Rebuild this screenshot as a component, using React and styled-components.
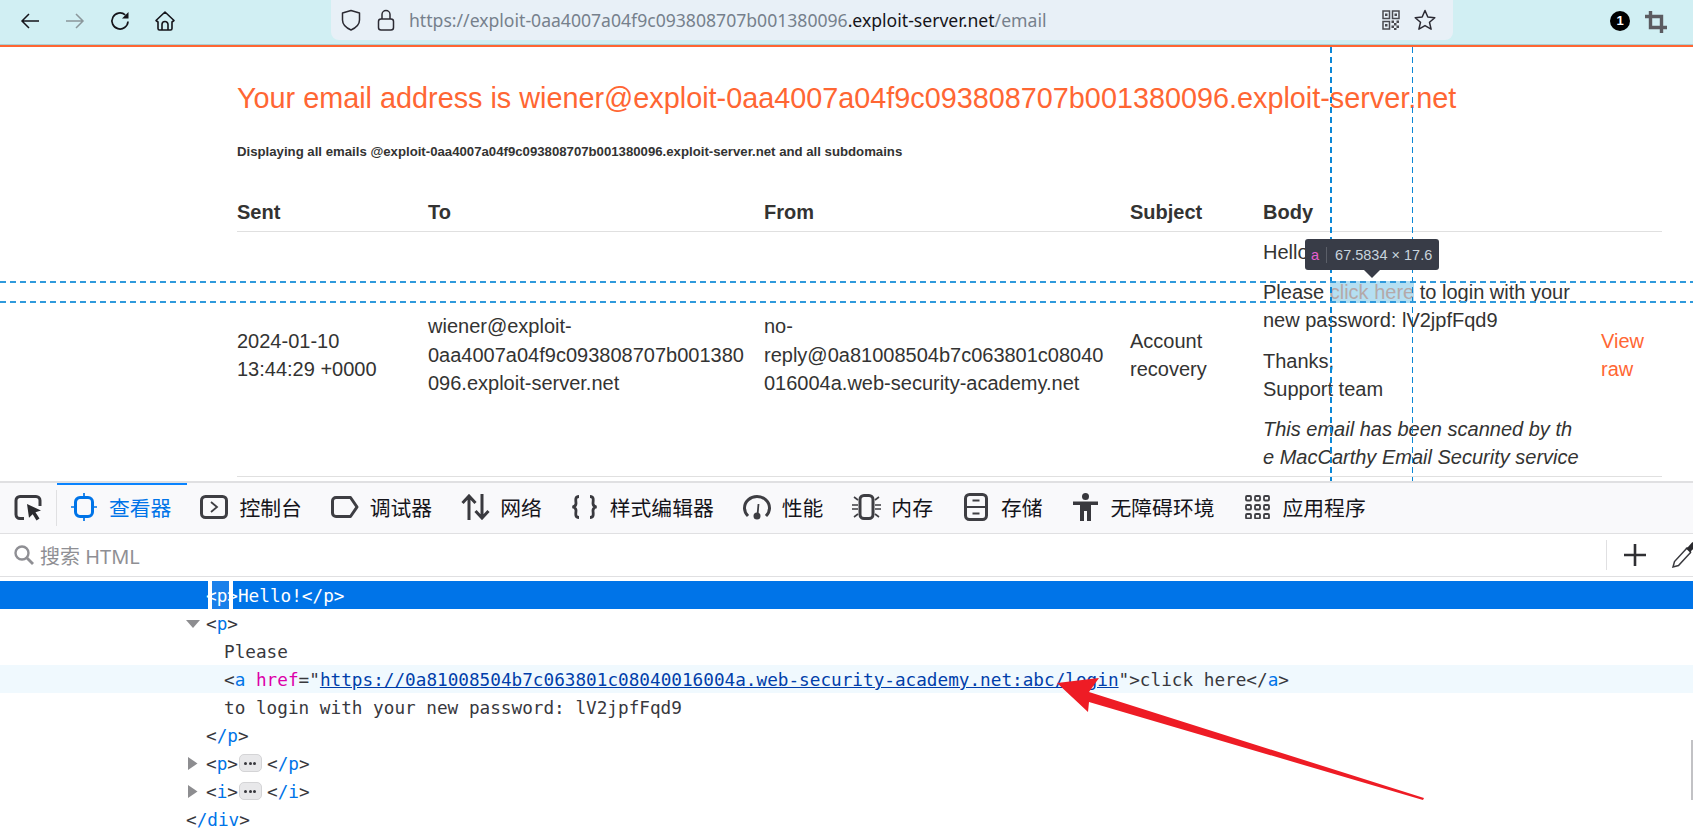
import React from 'react';
import styled, { createGlobalStyle } from 'styled-components';

const Global = createGlobalStyle`
  html, body { margin: 0; padding: 0; background: #fff; }
  body { font-family: "Liberation Sans", Arial, sans-serif; }
`;

const Shell = styled.div`
  width: 1693px;
  height: 836px;
  display: flex;
  flex-direction: column;
  overflow: hidden;
  position: relative;
`;

/* browser chrome */
const BrowserBar = styled.div`
  height: 45px;
  flex: none;
  background: #d1eff3;
  border-bottom: 2px solid #ff6633;
  box-shadow: inset 0 -1px 0 #a9cfd4;
  display: flex;
  align-items: flex-start;
  padding-left: 19px;
`;
const NavBtn = styled.div`
  width: 45px;
  height: 42px;
  display: flex;
  align-items: center;
  justify-content: flex-start;
  flex: none;
`;
const AddressBar = styled.div`
  margin-left: 132px;
  width: 1122px;
  height: 40px;
  flex: none;
  background: #e8f0f7;
  border-radius: 0 0 8px 8px;
  display: flex;
  align-items: center;
  padding: 0 9px;
  box-sizing: border-box;
`;
const UrlIcon = styled.span`
  display: flex;
  margin-right: ${(p) => p.$mr}px;
`;
const Url = styled.div`
  flex: 1;
  font-family: "Noto Sans", sans-serif;
  font-size: 17.6px;
  color: #76808c;
  white-space: nowrap;
  b { font-weight: 400; color: #15141a; }
`;
const Badge = styled.div`
  width: 20px;
  height: 20px;
  margin: 11px 0 0 157px;
  border-radius: 50%;
  background: #000;
  color: #fff;
  font-size: 13px;
  font-weight: 700;
  text-align: center;
  line-height: 20px;
  flex: none;
`;
const CropWrap = styled.div`
  margin: 10px 0 0 14px;
  flex: none;
`;

/* page */
const Page = styled.main`
  height: 434px;
  flex: none;
  position: relative;
  overflow: hidden;
  box-sizing: border-box;
  padding: 31px 31px 0 237px;
  color: #333332;
`;
const Title = styled.h1`
  margin: 0;
  font-size: 28.8px;
  line-height: 40px;
  font-weight: 400;
  color: #ff6633;
  white-space: nowrap;
`;
const Sub = styled.h2`
  margin: 24px 0 0;
  font-size: 13.2px;
  line-height: 20px;
  font-weight: 700;
  white-space: nowrap;
`;
const MailTable = styled.table`
  margin-top: 31px;
  width: 1425px;
  table-layout: fixed;
  border-collapse: collapse;
  font-size: 20px;
  line-height: 28.2px;
`;
const Th = styled.th`
  height: 38px;
  padding: 0;
  text-align: left;
  font-size: 20px;
  font-weight: 700;
  border-bottom: 1px solid #e0e0e0;
  width: ${(p) => p.$w}px;
`;
const Td = styled.td`
  padding: 6px 0 5px;
  vertical-align: middle;
  border-bottom: 1px solid #e0e0e0;
`;
const BodyP = styled.p`
  margin: 0 0 12px;
  &:last-child { margin-bottom: 0; }
`;
const ClickLink = styled.a`
  color: #b4a9a9;
  background: #b5dff2;
`;
const Raw = styled.a`
  color: #ff6633;
  display: block;
`;
const GuideV = styled.div`
  position: absolute;
  top: 0;
  bottom: 0;
  left: ${(p) => p.$x}px;
  width: ${(p) => p.$w}px;
  background: repeating-linear-gradient(to bottom, #0a87d6 0 6px, transparent 6px 10px);
`;
const GuideH = styled.div`
  position: absolute;
  left: 0;
  right: 0;
  top: ${(p) => p.$y}px;
  height: 2px;
  background: repeating-linear-gradient(to right, #2f9adc 0 6px, transparent 6px 10px);
`;
const Tip = styled.div`
  position: absolute;
  left: 1305px;
  top: 192px;
  width: 134px;
  height: 31px;
  box-sizing: border-box;
  background: #383c47;
  border-radius: 3px;
  color: #c9d4dd;
  font-size: 14.5px;
  display: flex;
  align-items: center;
  white-space: nowrap;
  padding-left: 6px;
  &::after {
    content: '';
    position: absolute;
    left: 59px;
    bottom: -8px;
    border: 8px solid transparent;
    border-bottom: 0;
    border-top-color: #383c47;
  }
`;
const TipTag = styled.span`
  color: #e65fd0;
  padding-right: 7px;
  margin-right: 8px;
  border-right: 1px solid #5b5f69;
`;

/* devtools */
const Tools = styled.section`
  flex: 1;
  border-top: 2px solid #e0e0e2;
  min-height: 0;
  display: flex;
  flex-direction: column;
`;
const TabBar = styled.div`
  height: 50px;
  flex: none;
  background: #f9f9fb;
  border-bottom: 1px solid #e0e0e2;
  display: flex;
  align-items: stretch;
`;
const PickBtn = styled.div`
  width: 57px;
  margin: 7px 0;
  border-right: 1px solid #e0e0e2;
  display: flex;
  align-items: center;
  padding-left: 14px;
  box-sizing: border-box;
  flex: none;
`;
const Tab = styled.div`
  display: flex;
  align-items: center;
  gap: 14px;
  padding: 0 16px 2px;
  font-family: "Noto Sans CJK SC", sans-serif;
  font-size: 20.8px;
  color: ${(p) => (p.$active ? '#0074e8' : '#15141a')};
  box-shadow: ${(p) => (p.$active ? 'inset 0 2px 0 #0a84ff' : 'none')};
  white-space: nowrap;
`;
const TabIcon = styled.span`
  width: 22px;
  display: flex;
  justify-content: center;
  flex: none;
  svg { flex: none; }
`;
const SearchBar = styled.div`
  height: 43px;
  flex: none;
  border-bottom: 1px solid #e0e0e2;
  display: flex;
  align-items: center;
  padding-left: 13px;
  box-sizing: border-box;
`;
const SearchText = styled.div`
  flex: 1;
  margin-left: 5px;
  font-family: "Noto Sans", "Noto Sans CJK SC", sans-serif;
  font-size: 20px;
  color: #8f8f94;
`;
const SearchTool = styled.div`
  height: 30px;
  padding-left: 16px;
  border-left: 1px solid #e0e0e2;
  display: flex;
  align-items: center;
  gap: 24px;
  width: 87px;
  box-sizing: border-box;
  overflow: hidden;
  flex: none;
  svg { flex: none; }
`;
const Code = styled.div`
  margin-top: 4px;
  font-family: "DejaVu Sans Mono", monospace;
  font-size: 17.69px;
  color: #38383d;
  white-space: pre;
`;
const Row = styled.div`
  height: 28px;
  line-height: 31px;
  padding-left: ${(p) => p.$x}px;
  background: ${(p) => (p.$sel ? '#0074e8' : p.$hover ? '#f0f9fe' : 'transparent')};
  color: ${(p) => (p.$sel ? '#fff' : '#38383d')};
`;
const Twisty = styled.span`
  display: inline-block;
  width: 20px;
  margin-left: -20px;
  height: 28px;
  vertical-align: top;
  svg { display: block; margin-top: 8px; }
`;
const Tag = styled.span`
  color: #0074e8;
`;
const Attr = styled.span`
  color: #dd00a9;
`;
const Link = styled.span`
  color: #003eaa;
  text-decoration: underline;
`;
const SelMark = styled.span`
  display: inline-block;
  height: 28px;
  vertical-align: top;
  background: linear-gradient(to right, #0074e8 2px, #fff 2px, #fff 6px, #1a80ea 6px, #1a80ea 23px, #fff 23px, #fff 27px, #0074e8 27px);
`;
const More = styled.span`
  display: inline-flex;
  vertical-align: top;
  width: 23px;
  height: 18px;
  margin: 5px 5px 0 1px;
  box-sizing: border-box;
  border: 1px solid #d4d4d6;
  border-radius: 5px;
  background: #e8e8ea;
  align-items: center;
  justify-content: center;
  gap: 1.5px;
  i {
    width: 3px;
    height: 3px;
    border-radius: 50%;
    background: #38383d;
  }
`;
const Arrow = styled.svg`
  position: absolute;
  left: 0;
  top: 0;
  pointer-events: none;
`;
const ScrollThumb = styled.div`
  position: absolute;
  right: 0;
  top: 740px;
  width: 2px;
  height: 60px;
  background: #c2c2c5;
`;

/* icons */
const Svg = ({ w = 22, h = 22, children }) => (
  <svg width={w} height={h} viewBox={`0 0 ${w} ${h}`} fill="none">
    {children}
  </svg>
);
const Back = () => (
  <Svg><path d="M20 11H3M10 4l-7 7 7 7" stroke="#15141a" strokeWidth="1.5" /></Svg>
);
const Forward = () => (
  <Svg><path d="M2 11h17M12 4l7 7-7 7" stroke="#8b979b" strokeWidth="1.5" /></Svg>
);
const Reload = () => (
  <Svg>
    <path d="M19 11.500a8 8 0 1 1-2.800-6.600" stroke="#15141a" strokeWidth="1.700" />
    <path d="M19.500 2v6.500h-6.500z" fill="#15141a" />
  </Svg>
);
const HomeIcon = () => (
  <Svg>
    <path d="M11 2 2 10.500 4 12V18.500a1.500 1.500 0 0 0 1.500 1.500h11a1.500 1.500 0 0 0 1.500-1.500V12l2-1.500z" stroke="#15141a" strokeWidth="1.600" strokeLinejoin="round" />
    <path d="M8 20V14.500a3 3 0 0 1 6 0V20" stroke="#15141a" strokeWidth="1.600" />
  </Svg>
);
const ShieldIcon = () => (
  <Svg>
    <path d="M11 1.500 2.500 4V11c0 5 4 8 8.500 10 4.500-2 8.500-5 8.500-10V4z" stroke="#2b2a33" strokeWidth="1.500" strokeLinejoin="round" />
  </Svg>
);
const LockIcon = () => (
  <Svg>
    <rect x="3.500" y="10" width="15" height="11" rx="2.500" stroke="#2b2a33" strokeWidth="1.500" />
    <path d="M7 10V5.500a4 4 0 0 1 8 0V10" stroke="#2b2a33" strokeWidth="1.500" />
  </Svg>
);
const QrIcon = () => (
  <Svg w={18} h={20}>
    <path d="M1 1h6.500v7.500H1zM10.500 1H17v7.500h-6.500zM1 11.500h6.500V19H1z" stroke="#4a4a4f" strokeWidth="1.500" />
    <path d="M3 3.500h2.500v2.500H3zM12.500 3.500H15v2.500h-2.500zM3 14h2.500v2.500H3zM9.500 10.500H12V13H9.500zM14.500 10.500H17V13h-2.500zM12 13h2.500v2.500H12zM9.500 15.500H12V18H9.500zM14.500 15.500H17V18h-2.500zM12 18h2.500v2H12z" fill="#4a4a4f" />
  </Svg>
);
const StarIcon = () => (
  <Svg>
    <path d="M11 1.500 13.800 8l7 .7-5.300 4.600 1.600 6.900L11 16.600l-6.100 3.600 1.600-6.900L1.200 8.700l7-.7z" stroke="#2b2a33" strokeWidth="1.500" strokeLinejoin="round" />
  </Svg>
);
const CropIcon = () => (
  <Svg w={24} h={24}>
    <path d="M6.500 1V17.500H23M1 6.500H17.500V23" stroke="#5b5b60" strokeWidth="3.400" />
  </Svg>
);
const PickIcon = () => (
  <Svg w={28} h={26}>
    <path d="M10 23.500H6A4 4 0 0 1 2 19.500V5.500A4 4 0 0 1 6 1.500H22A4 4 0 0 1 26 5.500V11" stroke="#3a3a3f" strokeWidth="3" />
    <path d="M13 9 27 15.500l-5.500 1.800 4 6.200-3 2-3.800-6.300-3.700 3.500z" fill="#2a2a2e" />
  </Svg>
);
const InspectIcon = () => (
  <Svg w={26} h={28}>
    <rect x="4.500" y="4.500" width="17" height="19" rx="4.500" stroke="#0074e8" strokeWidth="3" />
    <path d="M13 0v3M13 25v3M0 14h3M23 14h3" stroke="#0074e8" strokeWidth="1.700" />
  </Svg>
);
const ConsoleIcon = () => (
  <Svg w={28} h={24}>
    <rect x="1.500" y="1.500" width="25" height="21" rx="4" stroke="#3e3e43" strokeWidth="3" />
    <path d="M11 7l6 5-6 5" stroke="#3e3e43" strokeWidth="1.800" />
  </Svg>
);
const DebugIcon = () => (
  <Svg w={28} h={22}>
    <path d="M5 1.500h14.500L26 11l-6.500 9.500H5A3.500 3.500 0 0 1 1.500 17V5A3.500 3.500 0 0 1 5 1.500z" stroke="#3e3e43" strokeWidth="3" strokeLinejoin="round" />
  </Svg>
);
const NetIcon = () => (
  <Svg w={29} h={26}>
    <path d="M8 26V2M1.500 9 8 2l6.500 7M21 0v24M14.500 17l6.500 7 6.500-7" stroke="#3a3a3f" strokeWidth="3" />
  </Svg>
);
const StyleIcon = () => (
  <Svg w={27} h={24}>
    <path d="M8 1.500C3.500 1.500 5 6 5 8.500c0 2-1 3-3.500 3.500C4 12.500 5 13.500 5 15.500 5 18 3.500 22.500 8 22.500M19 1.500C23.500 1.500 22 6 22 8.500c0 2 1 3 3.500 3.500-2.500.5-3.500 1.500-3.500 3.500 0 2.500 1.500 7-3 7" stroke="#3a3a3f" strokeWidth="2.800" />
  </Svg>
);
const PerfIcon = () => (
  <Svg w={28} h={25}>
    <path d="M5 21C2.800 18.800 1.500 15.800 1.500 13a12.500 11.500 0 0 1 25 0c0 2.800-1.300 5.800-3.500 8" stroke="#3e3e43" strokeWidth="3" />
    <path d="m15.500 9-1 11" stroke="#3e3e43" strokeWidth="1.800" />
    <ellipse cx="14" cy="21" rx="3.500" ry="3.500" fill="#3e3e43" />
  </Svg>
);
const MemIcon = () => (
  <Svg w={29} h={26}>
    <rect x="8" y="1.500" width="13" height="23" rx="4" stroke="#3e3e43" strokeWidth="3" />
    <path d="M6 6 2 3M6 11H0M6 15H0M6 20l-4 3M23 6l4-3M23 11h6M23 15h6M23 20l4 3" stroke="#3e3e43" strokeWidth="1.600" />
  </Svg>
);
const StoreIcon = () => (
  <Svg w={24} h={28}>
    <rect x="1.500" y="1.500" width="21" height="25" rx="4" stroke="#3e3e43" strokeWidth="3" />
    <path d="M2 14h20M8.500 7.500h7M8.500 20.500h7" stroke="#3e3e43" strokeWidth="2" />
  </Svg>
);
const AccessIcon = () => (
  <Svg w={25} h={28}>
    <circle cx="12.500" cy="3.500" r="3.500" fill="#38383d" />
    <path d="M0 8.500h25v3.500h-7V28h-4v-10h-3v10H7V12H0z" fill="#38383d" />
  </Svg>
);
const AppsIcon = () => (
  <Svg w={25} h={24}>
    {[1, 10, 19].map((x) =>
      [1, 10, 19].map((y) => (
        <rect key={`${x}-${y}`} x={x} y={y} width="5" height="4.500" rx="1" stroke="#3e3e43" strokeWidth="1.800" />
      ))
    )}
  </Svg>
);
const SearchIcon = () => (
  <Svg>
    <circle cx="9" cy="9" r="6.500" stroke="#8f8f94" strokeWidth="2.400" />
    <path d="m14 14 6 6" stroke="#8f8f94" strokeWidth="2.800" />
  </Svg>
);
const PlusIcon = () => (
  <Svg w={24} h={24}>
    <path d="M12 1v22M1 12h22" stroke="#2f2f33" strokeWidth="2.600" />
  </Svg>
);
const DropperIcon = () => (
  <Svg w={28} h={28}>
    <path d="M16 7 3.500 20.500 2 26l5.500-1.500L20 11" stroke="#3a3a3f" strokeWidth="1.500" />
    <path d="m14.500 7 2.500-1 4-4.500c1.500-1 5 2.500 4 4l-4.500 4-1 2.500z" fill="#2a2a2e" />
  </Svg>
);
const Caret = ({ open }) => (
  <svg width="16" height="14" viewBox="0 0 16 14">
    {open ? <path d="M0 3h14l-7 8z" fill="#8d8d90" /> : <path d="M2 0v13l9.500-6.500z" fill="#8d8d90" />}
  </svg>
);

const tabs = [
  { label: '查看器', Icon: InspectIcon, active: true },
  { label: '控制台', Icon: ConsoleIcon },
  { label: '调试器', Icon: DebugIcon },
  { label: '网络', Icon: NetIcon },
  { label: '样式编辑器', Icon: StyleIcon },
  { label: '性能', Icon: PerfIcon },
  { label: '内存', Icon: MemIcon },
  { label: '存储', Icon: StoreIcon },
  { label: '无障碍环境', Icon: AccessIcon },
  { label: '应用程序', Icon: AppsIcon },
];

const Dots = () => (
  <More>
    <i />
    <i />
    <i />
  </More>
);

export default function App() {
  return (
    <Shell>
      <Global />
      <BrowserBar>
        <NavBtn><Back /></NavBtn>
        <NavBtn><Forward /></NavBtn>
        <NavBtn><Reload /></NavBtn>
        <NavBtn><HomeIcon /></NavBtn>
        <AddressBar>
          <UrlIcon $mr={13}><ShieldIcon /></UrlIcon>
          <UrlIcon $mr={12}><LockIcon /></UrlIcon>
          <Url>
            https://exploit-0aa4007a04f9c093808707b001380096<b>.exploit-server.net</b>/email
          </Url>
          <UrlIcon $mr={14}><QrIcon /></UrlIcon>
          <UrlIcon $mr={8}><StarIcon /></UrlIcon>
        </AddressBar>
        <Badge>1</Badge>
        <CropWrap><CropIcon /></CropWrap>
      </BrowserBar>

      <Page>
        <Title>Your email address is wiener@exploit-0aa4007a04f9c093808707b001380096.exploit-server.net</Title>
        <Sub>Displaying all emails @exploit-0aa4007a04f9c093808707b001380096.exploit-server.net and all subdomains</Sub>
        <MailTable>
          <thead>
            <tr>
              <Th $w={191}>Sent</Th>
              <Th $w={336}>To</Th>
              <Th $w={366}>From</Th>
              <Th $w={133}>Subject</Th>
              <Th $w={338}>Body</Th>
              <Th $w={61} />
            </tr>
          </thead>
          <tbody>
            <tr>
              <Td>2024-01-10<br />13:44:29 +0000</Td>
              <Td>wiener@exploit-<br />0aa4007a04f9c093808707b001380<br />096.exploit-server.net</Td>
              <Td>no-<br />reply@0a81008504b7c063801c08040<br />016004a.web-security-academy.net</Td>
              <Td>Account<br />recovery</Td>
              <Td>
                <BodyP>Hello!</BodyP>
                <BodyP>Please <ClickLink>click here</ClickLink> to login with your<br />new password: lV2jpfFqd9</BodyP>
                <BodyP>Thanks,<br />Support team</BodyP>
                <BodyP><i>This email has been scanned by th<br />e MacCarthy Email Security service</i></BodyP>
              </Td>
              <Td><Raw>View</Raw><Raw>raw</Raw></Td>
            </tr>
          </tbody>
        </MailTable>
        <GuideV $x={1330} $w={2} />
        <GuideV $x={1412} $w={1} />
        <GuideH $y={234} />
        <GuideH $y={254} />
        <Tip><TipTag>a</TipTag>67.5834 × 17.6</Tip>
      </Page>

      <Tools>
        <TabBar>
          <PickBtn><PickIcon /></PickBtn>
          {tabs.map(({ label, Icon, active }) => (
            <Tab key={label} $active={active}>
              <TabIcon><Icon /></TabIcon>
              {label}
            </Tab>
          ))}
        </TabBar>
        <SearchBar>
          <SearchIcon />
          <SearchText>搜索 HTML</SearchText>
          <SearchTool>
            <PlusIcon />
            <DropperIcon />
          </SearchTool>
        </SearchBar>
        <Code>
          <Row $x={206} $sel>
            <SelMark>{'<p>'}</SelMark>Hello!{'</p>'}
          </Row>
          <Row $x={206}>
            <Twisty><Caret open /></Twisty>
            {'<'}<Tag>p</Tag>{'>'}
          </Row>
          <Row $x={224}>Please</Row>
          <Row $x={224} $hover>
            {'<'}<Tag>a</Tag> <Attr>href</Attr>{'="'}<Link>https://0a81008504b7c063801c08040016004a.web-security-academy.net:abc/login</Link>{'">click here</'}<Tag>a</Tag>{'>'}
          </Row>
          <Row $x={224}>to login with your new password: lV2jpfFqd9</Row>
          <Row $x={206}>{'<'}<Tag>/p</Tag>{'>'}</Row>
          <Row $x={206}>
            <Twisty><Caret /></Twisty>
            {'<'}<Tag>p</Tag>{'>'}<Dots />{'<'}<Tag>/p</Tag>{'>'}
          </Row>
          <Row $x={206}>
            <Twisty><Caret /></Twisty>
            {'<'}<Tag>i</Tag>{'>'}<Dots />{'<'}<Tag>/i</Tag>{'>'}
          </Row>
          <Row $x={186}>{'<'}<Tag>/div</Tag>{'>'}</Row>
        </Code>
      </Tools>

      <ScrollThumb />
      <Arrow width="1693" height="836" viewBox="0 0 1693 836">
        <path d="M1057 683 1099 678 1089 692 1424 798 1423 800 1089 702 1088 712z" fill="#ee1c25" />
      </Arrow>
    </Shell>
  );
}
